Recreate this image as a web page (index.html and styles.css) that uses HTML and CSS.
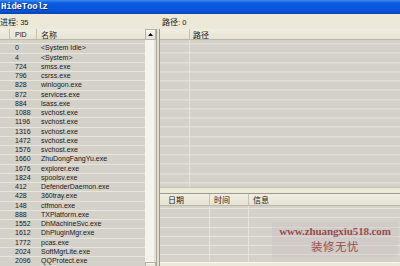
FILE: index.html
```html
<!DOCTYPE html>
<html>
<head>
<meta charset="utf-8">
<link rel="stylesheet" href="styles.css">
</head>
<body>
<div class="window">
  <div class="titlebar"><span class="title">HideToolz</span></div>
  <div class="infobar">
    <div class="info-left"><span class="cjk">进程</span>: 35</div>
    <div class="info-right"><span class="cjk">路径</span>: 0</div>
  </div>
  <div class="main">
    <div class="left">
      <div class="list">
        <div class="lhead">
          <div class="hc c0"></div>
          <div class="hc c1">PID</div>
          <div class="hc c2 cjk">名称</div>
        </div>
        <div class="lbody">
          <div class="row"><span class="c0"></span><span class="c1">0</span><span class="c2">&lt;System Idle&gt;</span></div>
          <div class="row"><span class="c0"></span><span class="c1">4</span><span class="c2">&lt;System&gt;</span></div>
          <div class="row"><span class="c0"></span><span class="c1">724</span><span class="c2">smss.exe</span></div>
          <div class="row"><span class="c0"></span><span class="c1">796</span><span class="c2">csrss.exe</span></div>
          <div class="row"><span class="c0"></span><span class="c1">828</span><span class="c2">winlogon.exe</span></div>
          <div class="row"><span class="c0"></span><span class="c1">872</span><span class="c2">services.exe</span></div>
          <div class="row"><span class="c0"></span><span class="c1">884</span><span class="c2">lsass.exe</span></div>
          <div class="row"><span class="c0"></span><span class="c1">1088</span><span class="c2">svchost.exe</span></div>
          <div class="row"><span class="c0"></span><span class="c1">1196</span><span class="c2">svchost.exe</span></div>
          <div class="row"><span class="c0"></span><span class="c1">1316</span><span class="c2">svchost.exe</span></div>
          <div class="row"><span class="c0"></span><span class="c1">1472</span><span class="c2">svchost.exe</span></div>
          <div class="row"><span class="c0"></span><span class="c1">1576</span><span class="c2">svchost.exe</span></div>
          <div class="row"><span class="c0"></span><span class="c1">1660</span><span class="c2">ZhuDongFangYu.exe</span></div>
          <div class="row"><span class="c0"></span><span class="c1">1676</span><span class="c2">explorer.exe</span></div>
          <div class="row"><span class="c0"></span><span class="c1">1824</span><span class="c2">spoolsv.exe</span></div>
          <div class="row"><span class="c0"></span><span class="c1">412</span><span class="c2">DefenderDaemon.exe</span></div>
          <div class="row"><span class="c0"></span><span class="c1">428</span><span class="c2">360tray.exe</span></div>
          <div class="row"><span class="c0"></span><span class="c1">148</span><span class="c2">ctfmon.exe</span></div>
          <div class="row"><span class="c0"></span><span class="c1">888</span><span class="c2">TXPlatform.exe</span></div>
          <div class="row"><span class="c0"></span><span class="c1">1552</span><span class="c2">DhMachineSvc.exe</span></div>
          <div class="row"><span class="c0"></span><span class="c1">1612</span><span class="c2">DhPluginMgr.exe</span></div>
          <div class="row"><span class="c0"></span><span class="c1">1772</span><span class="c2">pcas.exe</span></div>
          <div class="row"><span class="c0"></span><span class="c1">2024</span><span class="c2">SoftMgrLite.exe</span></div>
          <div class="row"><span class="c0"></span><span class="c1">2096</span><span class="c2">QQProtect.exe</span></div>
        </div>
      </div>
      <div class="vscroll">
        <div class="sbtn"><svg width="5" height="3" viewBox="0 0 5 3"><polygon points="2.5,0 5,3 0,3" fill="#000"/></svg></div>
        <div class="track"></div>
        <div class="sbtn down"></div>
      </div>
    </div>
    <div class="splitter"></div>
    <div class="right">
      <div class="toplist">
        <div class="lhead">
          <div class="hc r0"></div>
          <div class="hc r1 cjk">路径</div>
        </div>
        <div class="gridbody top-grid"></div>
      </div>
      <div class="hsplit"></div>
      <div class="botlist">
        <div class="lhead bhead">
          <div class="hc b0 cjk">日期</div>
          <div class="hc b1 cjk">时间</div>
          <div class="hc b2 cjk">信息</div>
        </div>
        <div class="gridbody bot-grid">
          <div class="watermark">
            <div class="wm-url">www.zhuangxiu518.com</div>
            <div class="wm-cn">装修无忧</div>
          </div>
        </div>
      </div>
      <div class="bottombar"></div>
    </div>
  </div>
</div>
</body>
</html>
```

FILE: styles.css
```css
html, body {
  margin: 0;
  padding: 0;
}
body {
  width: 400px;
  height: 266px;
  overflow: hidden;
  background: #ece9d8;
  font-family: "Liberation Sans", "Noto Sans CJK SC", sans-serif;
  font-size: 7px;
  color: #1a1a1a;
}
.window {
  display: flex;
  flex-direction: column;
  width: 400px;
  height: 266px;
}
.cjk {
  font-family: "Noto Sans CJK SC", sans-serif;
  font-size: 8px;
}
.titlebar {
  height: 14px;
  flex: none;
  background: linear-gradient(to bottom, #3d8bf2 0, #0b5ce0 3px, #0757dc 9px, #0650d0 12px, #0340a8 14px);
  display: flex;
  align-items: center;
  padding-left: 1px;
}
.title {
  font-family: "Liberation Mono", monospace;
  font-weight: bold;
  font-size: 9px;
  color: #fff;
  text-shadow: 1px 1px 0 #0a2a80;
  letter-spacing: -0.2px;
}
.infobar {
  height: 15px;
  flex: none;
  display: flex;
  align-items: center;
  background: #ece9d8;
  font-size: 7.5px;
}
.info-left {
  width: 162px;
}
.main {
  flex: 1;
  display: flex;
  min-height: 0;
}
.left {
  width: 157px;
  flex: none;
  display: flex;
}
.list {
  width: 145px;
  flex: none;
  display: flex;
  flex-direction: column;
  background: #d4d1c8;
  overflow: hidden;
}
.lhead {
  height: 11px;
  flex: none;
  display: flex;
  background: linear-gradient(to bottom, #f0eee2, #e6e3d3);
  border-bottom: 1px solid #bdb9a8;
  box-sizing: border-box;
}
.hc {
  box-sizing: border-box;
  border-right: 1px solid #c6c2b1;
  display: flex;
  align-items: center;
  white-space: nowrap;
}
.lhead .c0 { width: 10px; }
.lhead .c1 { width: 27px; padding-left: 5px; }
.lhead .c2 { flex: 1; padding-left: 4px; border-right: none; }
.lbody {
  padding-top: 3.4px;
}
.row {
  display: flex;
  height: 9.26px;
  line-height: 9.26px;
  background: linear-gradient(to bottom, #e7e5dd 0, #e7e5dd 1px, #d4d1c8 1px);
  white-space: nowrap;
}
.row .c0 { width: 10px; }
.row .c1 { width: 27px; padding-left: 5px; box-sizing: border-box; }
.row .c2 { flex: 1; padding-left: 4px; }
.vscroll {
  width: 12px;
  flex: none;
  display: flex;
  flex-direction: column;
  background: #efeee7;
  border-right: 1px solid #a9a698;
  box-sizing: border-box;
}
.sbtn {
  height: 11px;
  flex: none;
  box-sizing: border-box;
  border: 1px solid #b8b4a4;
  background: linear-gradient(to bottom, #f7f6f0, #e4e1d2);
  display: flex;
  align-items: center;
  justify-content: center;
}
.track {
  flex: 1;
  background: linear-gradient(to right, #f4f3ec 0, #f4f3ec 9px, #e3e1d6 9px);
}
.sbtn.down {
  height: 4px;
  border-bottom: none;
}
.splitter {
  width: 3px;
  flex: none;
  background: #e2dfd0;
  border-right: 1px solid #9c998c;
  box-sizing: border-box;
}
.right {
  flex: 1;
  display: flex;
  flex-direction: column;
  min-width: 0;
}
.toplist {
  height: 158px;
  flex: none;
  display: flex;
  flex-direction: column;
}
.r0 { width: 30px; }
.r1 { flex: 1; padding-left: 3px; border-right: none; }
.gridbody {
  flex: 1;
  position: relative;
  background-color: #d4d1c8;
}
.top-grid {
  background-image:
    linear-gradient(to right, transparent 29px, #e4e2da 29px, #e4e2da 30px, transparent 30px),
    repeating-linear-gradient(to bottom, #e7e5dd 0, #e7e5dd 1px, #d4d1c8 1px, #d4d1c8 9.26px);
  background-position: 0 0, 0 3.4px;
}
.hsplit {
  height: 7px;
  flex: none;
  background: #ece9d8;
  border-top: 1px solid #c7c4b5;
  border-bottom: 1px solid #9e9b8e;
  box-sizing: border-box;
}
.botlist {
  height: 68px;
  flex: none;
  display: flex;
  flex-direction: column;
}
.bhead {
  height: 12px;
}
.b0 { width: 50px; padding-left: 8px; }
.b1 { width: 39px; padding-left: 4px; }
.b2 { flex: 1; padding-left: 4px; border-right: none; }
.bot-grid {
  background-image:
    linear-gradient(to right, transparent 49px, #e4e2da 49px, #e4e2da 50px, transparent 50px),
    linear-gradient(to right, transparent 88px, #e4e2da 88px, #e4e2da 89px, transparent 89px),
    repeating-linear-gradient(to bottom, #e7e5dd 0, #e7e5dd 1px, #d4d1c8 1px, #d4d1c8 9.26px);
  background-position: 0 0, 0 0, 0 2px;
}
.watermark {
  position: absolute;
  left: 112px;
  top: 16px;
  width: 126px;
  height: 35px;
  background: rgba(205, 196, 196, 0.45);
  display: flex;
  flex-direction: column;
  align-items: center;
}
.wm-url {
  font-family: "Liberation Serif", serif;
  font-weight: bold;
  font-size: 11px;
  line-height: 14px;
  margin-top: 2px;
  color: #9a4b52;
  letter-spacing: -0.1px;
}
.wm-cn {
  font-family: "Noto Sans CJK SC", sans-serif;
  font-size: 11.5px;
  line-height: 16px;
  color: #9a4b52;
  letter-spacing: 0.5px;
}
.bottombar {
  flex: 1;
  background: #ece9d8;
  border-top: 1px solid #f8f7f2;
}
```
